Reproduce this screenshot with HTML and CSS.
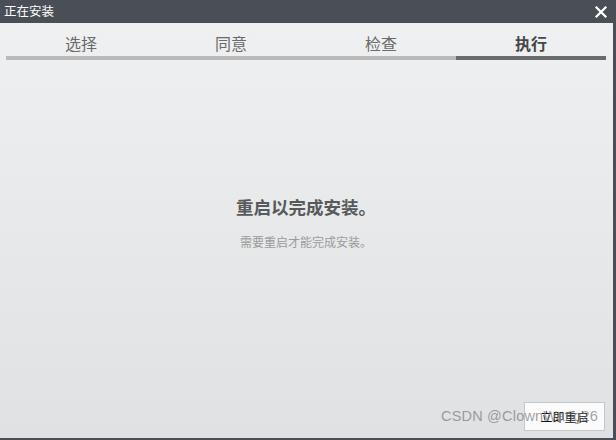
FILE: index.html
```html
<!DOCTYPE html>
<html lang="zh">
<head>
<meta charset="utf-8">
<link rel="stylesheet" href="styles.css">
</head>
<body>
<div class="window">
  <div class="titlebar">
    <span class="title">正在安装</span>
    <span class="close">
      <svg width="12" height="12" viewBox="0 0 12 12"><path d="M1.5 1.5 L10.5 10.5 M10.5 1.5 L1.5 10.5" stroke="#fff" stroke-width="2.2" stroke-linecap="square"/></svg>
    </span>
  </div>
  <div class="body">
    <div class="steps">
      <div class="step"><span class="label">选择</span><span class="bar"></span></div>
      <div class="step"><span class="label">同意</span><span class="bar"></span></div>
      <div class="step"><span class="label">检查</span><span class="bar"></span></div>
      <div class="step active"><span class="label">执行</span><span class="bar"></span></div>
    </div>
    <div class="message">
      <div class="heading">重启以完成安装。</div>
      <div class="sub">需要重启才能完成安装。</div>
    </div>
    <div class="footer">
      <button class="btn">立即重启</button>
      <span class="watermark">CSDN @ClownWang26</span>
    </div>
  </div>
</div>
</body>
</html>
```
FILE: styles.css
```css
* { box-sizing: border-box; }
html, body { margin: 0; padding: 0; }
body {
  width: 616px;
  height: 440px;
  overflow: hidden;
  font-family: "Noto Sans CJK SC", "Microsoft YaHei", sans-serif;
  background: #4a4f57;
}
.window {
  width: 616px;
  height: 440px;
  display: flex;
  flex-direction: column;
  padding: 0 3px 2px 0;
}
.titlebar {
  height: 23px;
  flex: none;
  margin-right: -3px;
  background: #4a4f57;
  display: flex;
  align-items: center;
  justify-content: space-between;
  padding: 0 9px 0 4px;
}
.title {
  color: #fff;
  font-size: 12.5px;
  line-height: 1;
}
.close { display: flex; align-items: center; }
.body {
  flex: 1;
  display: flex;
  flex-direction: column;
  background: linear-gradient(#eef0f1, #dfe1e2);
  padding: 0 7px 0 6px;
  position: relative;
}
.steps {
  display: grid;
  grid-template-columns: repeat(4, 1fr);
  padding-top: 8px;
}
.step {
  display: flex;
  flex-direction: column;
  align-items: center;
}
.label {
  font-size: 16px;
  line-height: 24px;
  color: #6a6a6a;
  height: 25px;
}
.bar {
  align-self: stretch;
  height: 4px;
  background: #b9b9b9;
}
.active .label { color: #474747; font-weight: bold; }
.active .bar { background: #6a6b6d; }
.message {
  display: flex;
  flex-direction: column;
  align-items: center;
  padding-top: 135px;
}
.heading {
  font-size: 17.5px;
  font-weight: bold;
  color: #58595b;
  line-height: 24px;
}
.sub {
  margin-top: 15px;
  font-size: 12px;
  color: #9a9b9c;
  line-height: 16px;
}
.footer {
  margin-top: auto;
  display: flex;
  justify-content: flex-end;
  padding-bottom: 7px;
  position: relative;
}
.btn {
  width: 81px;
  height: 29px;
  background: #fbfbfb;
  border: 1px solid #c4c6c8;
  font-family: inherit;
  font-size: 12px;
  color: #111;
  padding: 0;
  margin-right: 1px;
}
.watermark {
  position: absolute;
  z-index: 2;
  left: 435px;
  top: 6px;
  font-family: "Liberation Sans", Arial, sans-serif;
  font-size: 14.5px;
  color: rgba(120, 122, 124, 0.7);
  letter-spacing: 0.2px;
  pointer-events: none;
}
```
